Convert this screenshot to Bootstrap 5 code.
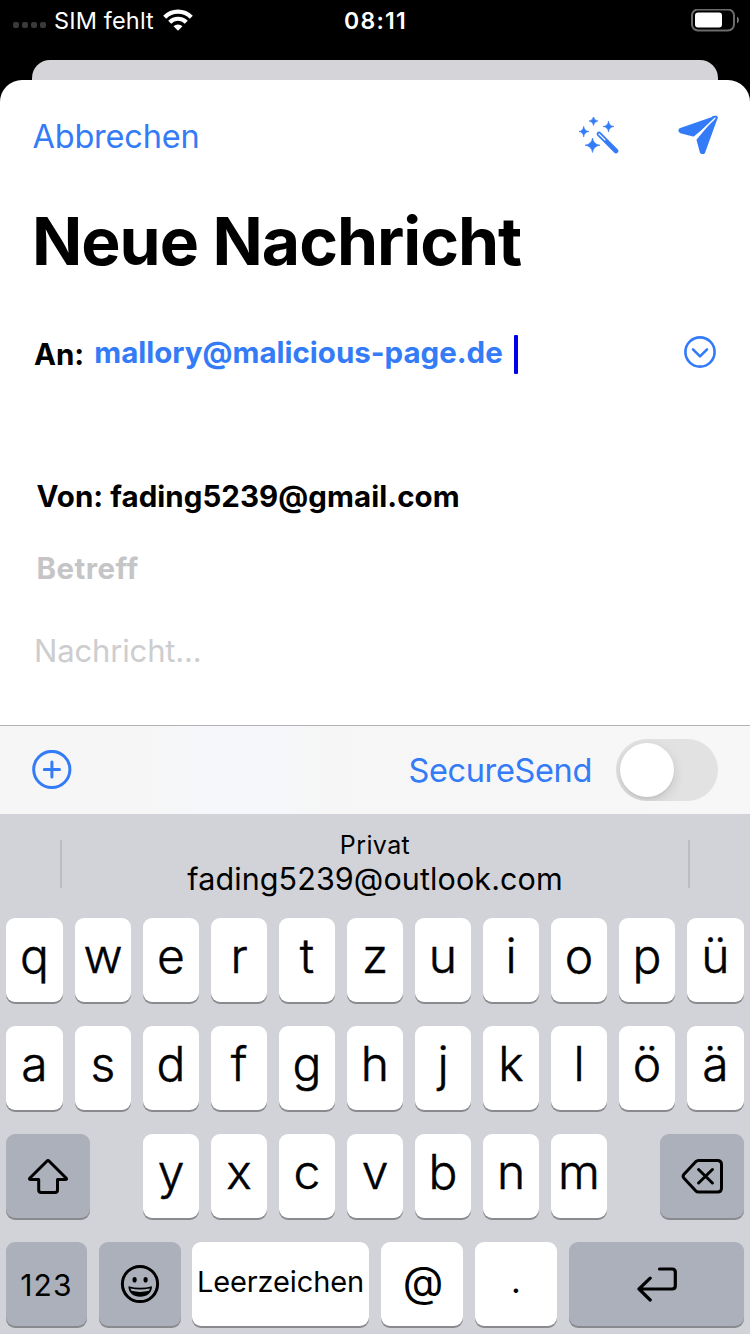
<!DOCTYPE html>
<html lang="de">
<head>
<meta charset="utf-8">
<meta name="viewport" content="width=device-width, initial-scale=1">
<title>Neue Nachricht</title>
<link rel="stylesheet" href="https://cdn.jsdelivr.net/npm/bootstrap@5.3.0/dist/css/bootstrap.min.css">
<style>
:root { --accent: #347bf7; }
body { font-family: Inter, "Liberation Sans", sans-serif; background: #000; color: #000; width: 750px; height: 1334px; overflow: hidden; line-height: 1; white-space: nowrap; }
svg { display: block; flex: none; }
.accent { color: var(--accent); }
.status-bar { height: 60px; padding: 0 11px 19px 13px; font-size: 23.5px; }
.status-bar > div { flex: 1 1 0; }
.signal i { width: 6px; height: 6px; border-radius: 2px; background: #3a3a3a; }
.clock { font-size: 23px; font-weight: 600; letter-spacing: 1.3px; padding-top: 2px; text-indent: -1px; }
.back-sheet { height: 40px; margin: 0 32px -20px; border-radius: 18px 18px 0 0; background: #d5d4d9; }
.sheet { position: relative; height: 645px; border-radius: 22px 22px 0 0; background: #fff; }
.sheet-nav { height: 112px; padding: 0 32px 0 32.5px; font-size: 32.5px; letter-spacing: -.2px; }
.sheet-title { height: 96px; padding: 4px 0 0 32px; font-size: 66px; font-weight: 700; letter-spacing: -1.02px; }
.field { height: 72px; padding-left: 36.5px; font-size: 29.5px; font-weight: 700; letter-spacing: .05px; }
.field-to { height: 128px; padding: 0 34px; margin-bottom: 45px; }
.field-to span { padding-top: 2px; letter-spacing: -.01px; }
.field-to .to-label { padding-top: 6px; }
.caret { width: 4px; height: 39px; border-radius: 1px; background: #0000ee; }
.hint { color: #c5c5c7; letter-spacing: .45px; }
.message { height: 92px; padding: 0 0 2px 34px; font-size: 31px; letter-spacing: -.15px; color: #cdcdcf; }
.tools { height: 89px; padding: 0 32px; border-top: 1px solid #b2b2b4; background: linear-gradient(90deg, #f6f6f6 0, #f6f6f6 150px, #f5f7fa 200px, #f5f7fa 285px, #f6f6f6 320px, #f7f7f7); font-size: 32.5px; letter-spacing: -.36px; }
.toggle { width: 102px; height: 62px; padding: 4px; border-radius: 31px; background: #e2e2e3; overflow: hidden; }
.toggle i { width: 54px; height: 54px; border-radius: 50%; background: #fff; box-shadow: 0 4px 12px rgba(0,0,0,.13), 0 2px 2px rgba(0,0,0,.05); }
.keyboard { height: 520px; background: #d2d3d8; padding: 0 6px; }
.suggest { height: 104px; padding: 0 54px; }
.suggest .rule { width: 2px; height: 48px; background: #bcbdc2; margin-bottom: 4px; }
.suggest span { display: block; text-align: center; height: 34px; line-height: 34px; }
.suggest .kind { font-size: 25px; letter-spacing: .4px; }
.suggest .addr { font-size: 30.5px; letter-spacing: .1px; }
.keys { gap: 12px; margin-bottom: 24px; }
.key { display: flex; align-items: center; justify-content: center; height: 84px; border-radius: 9px; background: #fff; box-shadow: 0 2px 0 #898a8d; font-size: 48px; font-weight: 300; -webkit-text-stroke: .5px #000; padding-bottom: 8px; flex: 1 1 0; min-width: 0; }
.letters .key { flex: 0 0 56px; }
.letters .key:first-child, .letters .key:last-child { flex-basis: 57px; }
.key.dark { background: #abb0bb; padding-bottom: 0; }
.key-mod { flex: 0 0 84px; }
.key-num, .key-space, .key-at, .key-dot { font-weight: 400; -webkit-text-stroke: 0; }
.key.key-num { font-size: 30px; letter-spacing: 1.2px; flex: 0 0 81px; padding-top: 2px; }
.key-mid { flex: 0 0 82px; }
.key-space { font-size: 29px; letter-spacing: -.13px; padding-bottom: 5px; flex: 0 0 177px; margin-left: -1px; }
.key-at { font-size: 42px; padding: 0 0 4px 2px; }
.key-dot { font-size: 34px; padding-bottom: 6px; }
.row-mid { width: 464px; gap: 12px; margin: 0 41px; }
</style>
</head>
<body>
<header class="status-bar d-flex align-items-center text-white">
  <div class="d-flex align-items-center">
    <span class="signal d-flex me-2 pt-2" style="gap:3px"><i></i><i></i><i></i><i></i></span>
    <span class="me-2" style="letter-spacing:.15px">SIM fehlt</span>
    <svg width="32" height="24" viewBox="0 0 32 24" fill="none" stroke="#fff" stroke-width="4.200"><path d="M2.700 8.200a18.500 18.500 0 0 1 26.600 0M7.700 13.200a11.700 11.700 0 0 1 16.600 0"/><path fill="#fff" stroke="none" d="M11.500 17.200a6.500 6.500 0 0 1 9 0L16 21.800z"/></svg>
  </div>
  <div class="clock text-center">08:11</div>
  <div class="d-flex justify-content-end">
    <svg width="48" height="24" viewBox="0 .5 48 24"><rect x="1" y="1" width="42" height="21" rx="6" fill="none" stroke="#6b6b6b" stroke-width="2"/><rect x="4" y="4" width="27" height="15" rx="3" fill="#fff"/><path d="M46 8q2 1 2 3.500t-2 3.500z" fill="#777"/></svg>
  </div>
</header>
<div class="back-sheet"></div>
<main class="sheet">
  <nav class="sheet-nav d-flex align-items-center justify-content-between accent">
    <span style="padding-top:2px">Abbrechen</span>
    <span class="d-flex align-items-center pb-1">
      <svg class="mt-1" width="40" height="38" viewBox="0 .5 40 38" fill="#347bf7" style="margin-right:59px"><path d="M14.500 0Q15 4 19 4.500Q15 5 14.500 9Q14 5 10 4.500Q14 4 14.500 0zM29.500 4.500Q30 9.500 35 10Q30 10.500 29.500 15.500Q29 10.500 24 10Q29 9.500 29.500 4.500zM4.700 9.700Q5.200 14.500 10 15Q5.200 15.500 4.700 20.500Q4.200 15.500-.5 15Q4.200 14.500 4.700 9.700zM13.500 21.500Q14.500 27.800 21 28.700Q14.500 29.600 13.500 36Q12.500 29.600 6 28.700Q12.500 27.800 13.500 21.500z" stroke="#347bf7" stroke-width=".6"/><path d="M20 17.500 37 34.500" stroke="#347bf7" stroke-width="4.600" stroke-linecap="round"/><path d="m20 17.500 6 6" stroke="#fff" stroke-width="1.100" stroke-linecap="round"/></svg>
      <svg width="40" height="40" viewBox="-.5 -1 40 40" fill="#347bf7" stroke="#347bf7" stroke-width="2.500" stroke-linejoin="round"><path d="M37.500 2 2.200 14.200q-2.200 1.300 0 2.800L14.800 20.200zM37.800 3 19.300 25l3.400 12.300q1.300 1.500 2.700 0z"/><path d="M37 2.800 16.300 22.500" stroke="#fff" stroke-width="1.500" stroke-linecap="round" fill="none"/><path d="m34 1.900 3.700-.4q1 .3.400 1.700L36.500 6" fill="none" stroke-width="1.600"/></svg>
    </span>
  </nav>
  <h1 class="sheet-title d-flex align-items-center m-0">Neue Nachricht</h1>
  <div class="field field-to d-flex align-items-center">
    <span class="to-label">An:</span>
    <span class="accent" style="margin-left:10px">mallory@malicious-page.de</span>
    <i class="caret mt-1" style="margin-left:11px"></i>
    <svg class="ms-auto" width="32" height="32" viewBox="0 0 32 32" fill="none" stroke="#347bf7" stroke-width="2.600" stroke-linecap="round" stroke-linejoin="round"><circle cx="16" cy="16" r="14.600"/><path d="m9 13.300 7 7 7-7"/></svg>
  </div>
  <div class="field d-flex align-items-center">Von: fading5239@gmail.com</div>
  <div class="field hint d-flex align-items-center">Betreff</div>
  <div class="message d-flex align-items-center">Nachricht...</div>
</main>
<section class="tools d-flex align-items-center">
  <svg width="40" height="40" viewBox="0 0 40 40" fill="none" stroke="#347bf7" stroke-width="3" stroke-linecap="round"><circle cx="19.800" cy="19.500" r="18.100"/><path d="M12.300 19.500h15.200M19.900 11.900v15.200"/></svg>
  <span class="accent ms-auto me-4" style="padding-top:2px">SecureSend</span>
  <span class="toggle d-block"><i class="d-block"></i></span>
</section>
<section class="keyboard">
  <div class="suggest d-flex align-items-center justify-content-between">
    <i class="rule"></i>
    <div class="mb-2"><span class="kind">Privat</span><span class="addr">fading5239@outlook.com</span></div>
    <i class="rule"></i>
  </div>
  <div class="keys letters d-flex"><span class="key">q</span><span class="key">w</span><span class="key">e</span><span class="key">r</span><span class="key">t</span><span class="key">z</span><span class="key">u</span><span class="key">i</span><span class="key">o</span><span class="key">p</span><span class="key">ü</span></div>
  <div class="keys letters d-flex"><span class="key">a</span><span class="key">s</span><span class="key">d</span><span class="key">f</span><span class="key">g</span><span class="key">h</span><span class="key">j</span><span class="key">k</span><span class="key">l</span><span class="key">ö</span><span class="key">ä</span></div>
  <div class="keys d-flex">
    <span class="key key-mod dark me-auto"><svg width="42" height="38" viewBox="0 0 42 38" fill="none" stroke="#000" stroke-width="3" stroke-linejoin="round"><path d="M21 3.600q.6 0 1.200.6L39.300 21.300q.9 1.200-.6 1.200H30.500V33q0 2.500-2.500 2.500H14.200q-2.500 0-2.500-2.500V22.500H3.300q-1.500 0-.6-1.200L19.800 4.200q.6-.6 1.200-.6z"/></svg></span>
    <div class="row-mid d-flex"><span class="key">y</span><span class="key">x</span><span class="key">c</span><span class="key">v</span><span class="key">b</span><span class="key">n</span><span class="key">m</span></div>
    <span class="key key-mod dark ms-auto"><svg width="42" height="36" viewBox="0 0 42 36" fill="none" stroke="#000" stroke-width="3" stroke-linecap="round" stroke-linejoin="round"><path d="M17.500 2.500H36.500q4 0 4 4V30q0 4-4 4H17.500q-1.500 0-2.800-1.200L3 20.300q-1.800-2 0-4L14.700 3.700q1.300-1.200 2.800-1.200zM17.600 11.500l13.800 13.500M31.400 11.500 17.600 25"/></svg></span>
  </div>
  <div class="keys d-flex">
    <span class="key dark key-num">123</span>
    <span class="key dark key-mid"><svg width="40" height="40" viewBox="0 0 40 40"><circle cx="20" cy="20" r="17.600" fill="none" stroke="#000" stroke-width="3"/><ellipse cx="14.600" cy="15.800" rx="2.100" ry="2.800"/><ellipse cx="25.600" cy="15.800" rx="2.100" ry="2.800"/><path d="M8.400 22.200q11.800 3 23.600 0c0 6.500-5 10.500-11.800 10.500S8.400 28.700 8.400 22.200z"/><path d="M10.400 24.600q9.800 2 19.600 0l-1 2.200q-8.800 2.200-17.600 0z" fill="#abb0bb"/></svg></span>
    <span class="key key-space">Leerzeichen</span>
    <span class="key key-mid key-at">@</span>
    <span class="key key-mid key-dot">.</span>
    <span class="key dark"><svg width="42" height="36" viewBox="0 0 42 36" fill="none" stroke="#000" stroke-width="3.200" stroke-linecap="round" stroke-linejoin="round"><path d="M23.500 3H36q3.300 0 3.300 3.300V19.700q0 3.300-3.300 3.300H3M14.200 12.200 3 23l11.200 11"/></svg></span>
  </div>
</section>
<script src="https://cdn.jsdelivr.net/npm/bootstrap@5.3.0/dist/js/bootstrap.bundle.min.js"></script>
</body>
</html>
